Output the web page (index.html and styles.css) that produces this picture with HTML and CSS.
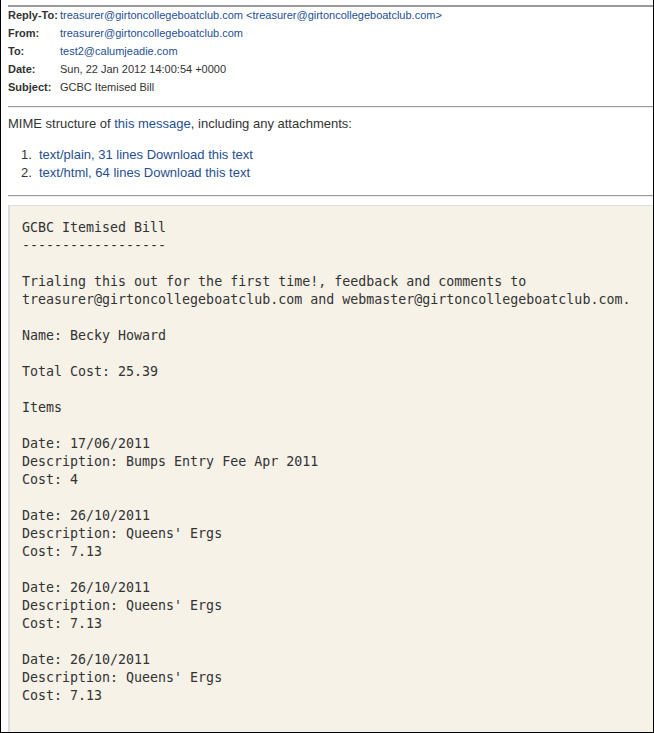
FILE: index.html
```html
<!DOCTYPE html>
<html>
<head>
<meta charset="utf-8">
<link rel="stylesheet" href="styles.css">
</head>
<body>
<div class="frame">
  <div class="content">
    <div class="topline"></div>
    <table class="headers">
      <tr><th>Reply-To:</th><td><a>treasurer@girtoncollegeboatclub.com &lt;treasurer@girtoncollegeboatclub.com&gt;</a></td></tr>
      <tr><th>From:</th><td><a>treasurer@girtoncollegeboatclub.com</a></td></tr>
      <tr><th>To:</th><td><a>test2@calumjeadie.com</a></td></tr>
      <tr><th>Date:</th><td>Sun, 22 Jan 2012 14:00:54 +0000</td></tr>
      <tr><th>Subject:</th><td>GCBC Itemised Bill</td></tr>
    </table>
    <hr class="rule rule-first">
    <p class="mime">MIME structure of <a>this message</a>, including any attachments:</p>
    <ol class="parts">
      <li><a>text/plain, 31 lines</a> <a>Download this text</a></li>
      <li><a>text/html, 64 lines</a> <a>Download this text</a></li>
    </ol>
    <hr class="rule">
    <pre class="body">GCBC Itemised Bill
------------------

Trialing this out for the first time!, feedback and comments to
treasurer@girtoncollegeboatclub.com and webmaster@girtoncollegeboatclub.com.

Name: Becky Howard

Total Cost: 25.39

Items

Date: 17/06/2011
Description: Bumps Entry Fee Apr 2011
Cost: 4

Date: 26/10/2011
Description: Queens' Ergs
Cost: 7.13

Date: 26/10/2011
Description: Queens' Ergs
Cost: 7.13

Date: 26/10/2011
Description: Queens' Ergs
Cost: 7.13

</pre>
  </div>
</div>
</body>
</html>
```

FILE: styles.css
```css
html, body {
  margin: 0;
  padding: 0;
  background: #fff;
}

.frame {
  width: 654px;
  height: 733px;
  box-sizing: border-box;
  border-left: 1px solid #000;
  border-right: 1px solid #000;
  border-bottom: 1px solid #000;
  overflow: hidden;
  font-family: "Liberation Sans", Arial, sans-serif;
  color: #333;
}

.content {
  padding-left: 7px;
  padding-top: 5px;
}

.topline {
  border-top: 2px solid #999;
}

a {
  color: #1f4f94;
  text-decoration: none;
}

.headers {
  border-collapse: collapse;
  font-size: 11px;
  margin-top: -1px;
  table-layout: fixed;
}

.headers th {
  text-align: left;
  font-weight: bold;
  color: #333;
  height: 18px;
  width: 52px;
  max-width: 52px;
  padding: 0;
  vertical-align: middle;
  white-space: nowrap;
  overflow: visible;
}

.headers td {
  padding: 0;
  height: 18px;
  vertical-align: middle;
  white-space: nowrap;
  color: #333;
}

.rule {
  border: 0;
  border-top: 1px solid #999;
  border-bottom: 1px solid #eee;
  margin: 10px 0 0 0;
  height: 0;
}

.mime {
  font-size: 13px;
  margin: 7px 0 0 0;
  line-height: 18px;
}

.parts {
  font-size: 13px;
  line-height: 18px;
  margin: 13px 0 0 0;
  padding-left: 31px;
  list-style: none;
  counter-reset: part;
}

.parts li {
  counter-increment: part;
}

.parts li::before {
  content: counter(part) ".";
  display: inline-block;
  box-sizing: border-box;
  width: 19px;
  margin-left: -19px;
  padding-left: 1px;
  color: #333;
}

.parts + .rule {
  margin-top: 13px;
}

.body {
  margin: 8px 0 0 0;
  background: #f6f2e8;
  border-left: 2px solid #ddd;
  border-top: 1px solid #ddd;
  padding: 13px 13px 20px 12px;
  font-family: "DejaVu Sans Mono", "Liberation Mono", monospace;
  font-size: 13.3px;
  line-height: 18px;
  color: #333;
  white-space: pre;
}
```
